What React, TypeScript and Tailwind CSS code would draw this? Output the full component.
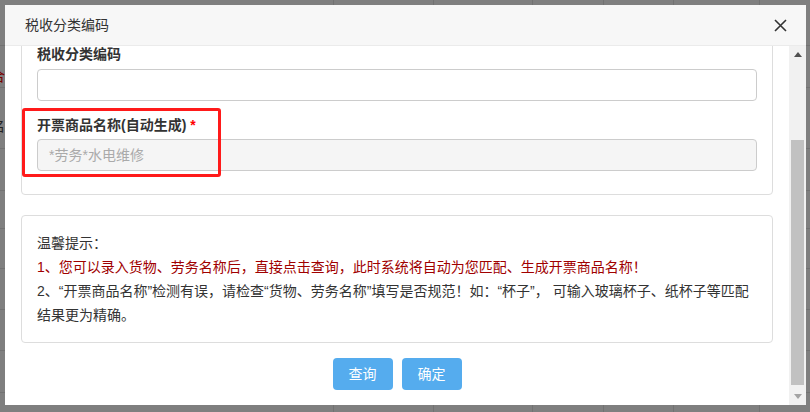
const font = {
  fontFamily: '"Liberation Sans", "Noto Sans CJK SC", sans-serif',
};

const rowLines = [45, 87, 148, 190, 228, 268, 309, 350, 392];
const colLines = [333, 433, 532, 603, 673, 759];

const App = () => {
  return (
    <div
      className="relative w-[810px] h-[412px] overflow-hidden bg-[#7f7f7f] text-[14px] text-[#333]"
      style={font}
    >
      {/* page behind the mask */}
      {rowLines.map((y) => (
        <div key={y} className="absolute left-0 w-full h-px bg-[#727272]" style={{ top: y }} />
      ))}
      {colLines.map((x) => (
        <div key={x} className="absolute top-0 h-full w-px bg-[#727272]" style={{ left: x }} />
      ))}
      <span className="absolute left-[-9px] top-[66px] text-[14px] text-[#7a0000]">合</span>
      <span className="absolute left-[-9px] top-[116px] text-[14px] text-[#222]">名</span>

      {/* dialog */}
      <div className="absolute left-[5px] top-[5px] w-[801px] h-[400px] bg-white flex flex-col">
        <div className="h-[41px] shrink-0 flex items-center justify-between pl-[20px] pr-[19px] bg-[#f7f7f7] border-b border-[#ebebeb]">
          <span className="text-[14px] text-[#333]">税收分类编码</span>
          <svg width="13" height="13" viewBox="0 0 13 13" className="text-[#333]">
            <path d="M1 1L12 12M12 1L1 12" stroke="currentColor" strokeWidth="1.6" />
          </svg>
        </div>

        <div className="flex flex-1 overflow-hidden">
          <div className="flex-1 flex flex-col px-4 overflow-hidden">
            {/* form card, scrolled */}
            <div className="relative -mt-[18px] shrink-0 border border-[#dddddd] rounded-[4px] px-[15px] pt-[15px] pb-[23px]">
              <div className="font-bold leading-5 mb-[5px]">税收分类编码</div>
              <div className="h-[32px] border border-[#cccccc] rounded-[4px] bg-white" />
              <div className="font-bold leading-5 mt-[14px] mb-[4px]">
                开票商品名称(自动生成) <span className="text-[#ff0000]">*</span>
              </div>
              <div className="h-[32px] border border-[#cccccc] rounded-[4px] bg-[#f5f5f5] flex items-center px-[11px] text-[#aaaaaa]">
                *劳务*水电维修
              </div>
              <div className="absolute left-[0px] top-[79px] w-[199px] h-[69px] border-[3px] border-[#ff1a1a] rounded-[3px]" />
            </div>

            {/* tips */}
            <div className="mt-[20px] shrink-0 border border-[#dddddd] rounded-[4px] px-[15px] py-[15px] leading-6 whitespace-nowrap">
              <div>温馨提示：</div>
              <div className="text-[#a00000]">
                1、您可以录入货物、劳务名称后，直接点击查询，此时系统将自动为您匹配、生成开票商品名称！
              </div>
              <div>
                2、“开票商品名称”检测有误，请检查“货物、劳务名称”填写是否规范！如：“杯子”， 可输入玻璃杯子、纸杯子等匹配
              </div>
              <div>结果更为精确。</div>
            </div>

            <div className="flex justify-center gap-[9px] mt-[15px]">
              <button className="w-[60px] h-[32px] rounded-[4px] bg-[#55acee] text-white text-[14px]">
                查询
              </button>
              <button className="w-[60px] h-[32px] rounded-[4px] bg-[#55acee] text-white text-[14px]">
                确定
              </button>
            </div>
          </div>

          {/* scrollbar */}
          <div className="w-[17px] shrink-0 bg-[#f1f1f1] flex flex-col">
            <div className="h-[17px] flex items-center justify-center">
              <svg width="8" height="5" viewBox="0 0 8 5">
                <path d="M0 5L4 0L8 5Z" fill="#505050" />
              </svg>
            </div>
            <div className="flex-1 pt-[77px] pb-[3px] px-[2px] flex">
              <div className="flex-1 bg-[#c1c1c1]" />
            </div>
            <div className="h-[17px] flex items-center justify-center">
              <svg width="8" height="5" viewBox="0 0 8 5">
                <path d="M0 0L8 0L4 5Z" fill="#a3a3a3" />
              </svg>
            </div>
          </div>
        </div>
      </div>
    </div>
  );
};

export default App;
